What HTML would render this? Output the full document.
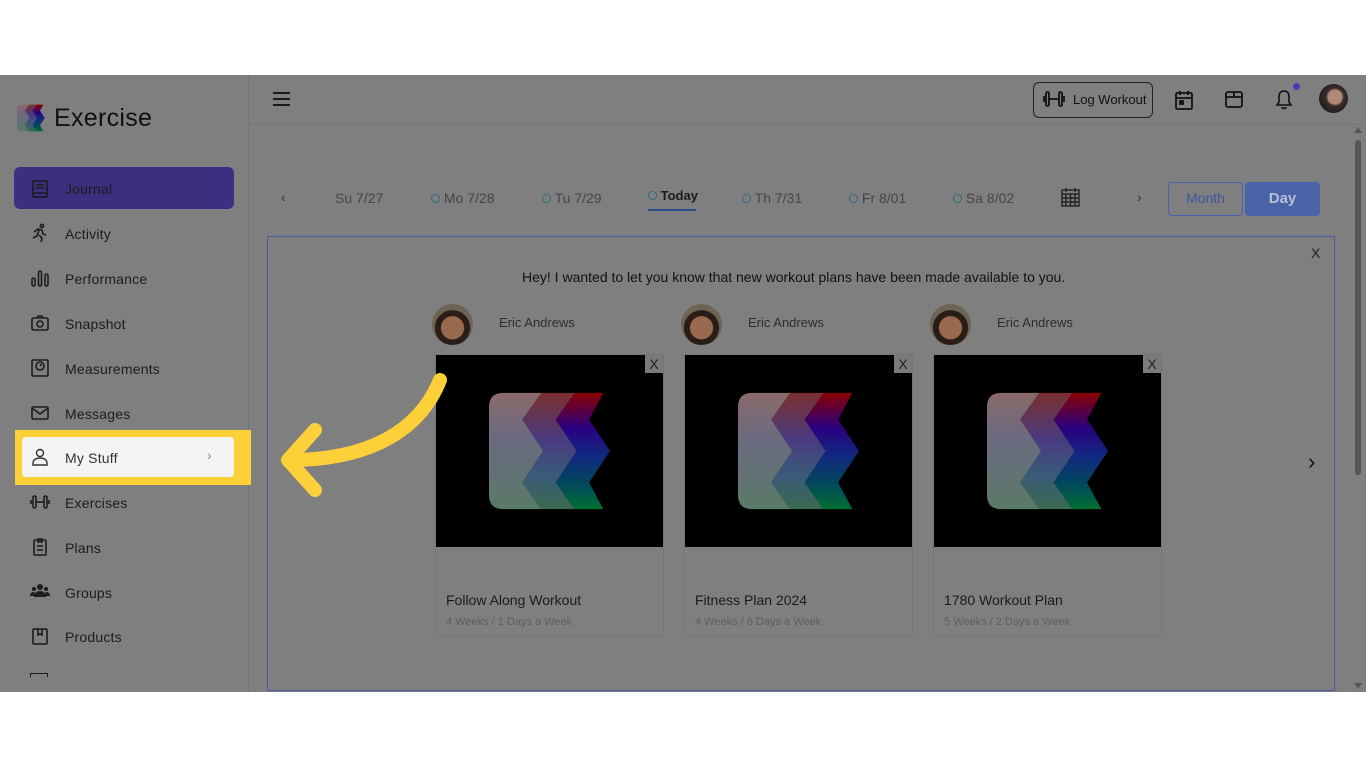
<!DOCTYPE html>
<html><head><meta charset="utf-8"><style>
*{margin:0;padding:0;box-sizing:border-box}
body{width:1366px;height:768px;background:#fff;font-family:"Liberation Sans",sans-serif;position:relative;overflow:hidden}
.app{position:absolute;left:0;top:75px;width:1366px;height:617px;background:#7f7f7f;overflow:hidden}
.side{position:absolute;left:0;top:0;width:249px;height:617px;border-right:1px solid #757575}
.top{position:absolute;left:249px;top:0;right:0;height:50px;border-bottom:1px solid #757575}
.nav{position:absolute;left:65px;font-size:14px;color:#1c1c1c;letter-spacing:.2px}
.ico{position:absolute;left:30px;width:20px;height:20px}
.t{position:absolute;font-size:14px;color:#3a3a3a}
.card{position:absolute;top:279px;width:229px;height:282px;border:1px solid #767676;background:#7f7f7f}
.card .img{height:192px;background:#000;position:relative}
.card .x{position:absolute;right:0;top:0;width:18px;height:18px;background:#7a7a7a;color:#222;font-size:14px;text-align:center;line-height:18px}
.card .n{position:absolute;left:10px;top:237px;font-size:14px;color:#1a1a1a}
.card .s{position:absolute;left:10px;top:261px;font-size:11px;color:#5e5e5e}
.av{position:absolute;top:229px;width:41px;height:41px;border-radius:50%;background:radial-gradient(circle at 50% 58%,#9a6a50 0 36%,#2a1c16 38% 55%,#6e6354 57%)}
.an{position:absolute;top:240px;font-size:13px;color:#2e2e2e}
</style></head><body>
<svg width="0" height="0" style="position:absolute"><defs>
<linearGradient id="a" x1="0" y1="0" x2="0" y2="1"><stop offset="0" stop-color="#8a6a6a"/><stop offset=".4" stop-color="#6a6a80"/><stop offset="1" stop-color="#5a7a68"/></linearGradient>
<linearGradient id="b" x1="0" y1="0" x2="0" y2="1"><stop offset="0" stop-color="#7a3030"/><stop offset=".4" stop-color="#4a3a80"/><stop offset=".7" stop-color="#3a5a7a"/><stop offset="1" stop-color="#3a6a50"/></linearGradient>
<linearGradient id="c" x1="0" y1="0" x2="0" y2="1"><stop offset="0" stop-color="#8a0000"/><stop offset=".3" stop-color="#2a0080"/><stop offset=".55" stop-color="#102a80"/><stop offset=".8" stop-color="#004a5a"/><stop offset="1" stop-color="#007030"/></linearGradient>
<g id="lg">
<path d="M15 0H55L35 28 57 61 35 94 55 122H15Q0 122 0 107V15Q0 0 15 0z" fill="url(#a)"/>
<path d="M55 0H90L70 28 92 61 70 94 90 122H55L35 94 57 61 35 28z" fill="url(#b)"/>
<path d="M90 0H120L105 28 127 61 105 94 120 122H90L70 94 92 61 70 28z" fill="url(#c)"/>
</g></defs></svg>
<div class="app">
<div class="side">
 <svg style="position:absolute;left:17px;top:29px" width="28" height="28" viewBox="0 0 128 122"><use href="#lg"/></svg>
 <div style="position:absolute;left:54px;top:29px;font-size:25px;color:#111;letter-spacing:.3px">Exercise</div>
 <div style="position:absolute;left:14px;top:92px;width:220px;height:42px;background:#3b2f7f;border-radius:6px"></div>
 <svg class="ico" style="top:104px" viewBox="0 0 20 20" fill="none" stroke="#1c1c1c" stroke-width="1.6"><rect x="3" y="2" width="14" height="16" rx="1"/><path d="M6 6h8M6 9h8M3 14h14"/></svg>
 <div class="nav" style="top:106px">Journal</div>
 <svg class="ico" style="top:148px" viewBox="0 0 20 20" fill="none" stroke="#1c1c1c" stroke-width="1.6"><circle cx="12" cy="3" r="1.6"/><path d="M4 9l4-3 4 1 1 4 3 1M9 7l-2 6-4 2M9 12l3 3-1 4"/></svg>
 <div class="nav" style="top:151px">Activity</div>
 <svg class="ico" style="top:193px" viewBox="0 0 20 20" fill="none" stroke="#1c1c1c" stroke-width="1.6"><rect x="2" y="10" width="3" height="8" rx="1.5"/><rect x="8.5" y="3" width="3" height="15" rx="1.5"/><rect x="15" y="6" width="3" height="12" rx="1.5"/></svg>
 <div class="nav" style="top:196px">Performance</div>
 <svg class="ico" style="top:238px" viewBox="0 0 20 20" fill="none" stroke="#1c1c1c" stroke-width="1.6"><rect x="2" y="5" width="16" height="12" rx="1.5"/><path d="M7 5l1-2h4l1 2"/><circle cx="10" cy="11" r="3"/></svg>
 <div class="nav" style="top:241px">Snapshot</div>
 <svg class="ico" style="top:283px" viewBox="0 0 20 20" fill="none" stroke="#1c1c1c" stroke-width="1.6"><rect x="2" y="2" width="16" height="16" rx="1.5"/><circle cx="10" cy="8" r="4"/><path d="M10 8l1.5-2"/></svg>
 <div class="nav" style="top:286px">Measurements</div>
 <svg class="ico" style="top:328px" viewBox="0 0 20 20" fill="none" stroke="#1c1c1c" stroke-width="1.6"><rect x="2" y="4" width="16" height="12" rx="1"/><path d="M2 5l8 6 8-6"/></svg>
 <div class="nav" style="top:331px">Messages</div>
 <div style="position:absolute;left:15px;top:355px;width:236px;height:55px;background:#fdd039"></div>
 <div style="position:absolute;left:22px;top:362px;width:212px;height:40px;background:#f4f4f4;border-radius:4px"></div>
 <svg class="ico" style="top:372px" viewBox="0 0 20 20" fill="none" stroke="#333" stroke-width="1.4"><circle cx="10" cy="6" r="3.5"/><path d="M3 18v-2c0-3 3-5 7-5s7 2 7 5v2z"/></svg>
 <div class="nav" style="top:375px;color:#333">My Stuff</div>
 <div style="position:absolute;left:207px;top:372px;font-size:14px;color:#888">›</div>
 <svg class="ico" style="top:417px" viewBox="0 0 20 20" fill="none" stroke="#1c1c1c" stroke-width="1.6"><rect x="3" y="4" width="3" height="12" rx="1.5"/><rect x="14" y="4" width="3" height="12" rx="1.5"/><path d="M6 10h8M1 8v4M19 8v4"/></svg>
 <div class="nav" style="top:420px">Exercises</div>
 <svg class="ico" style="top:462px" viewBox="0 0 20 20" fill="none" stroke="#1c1c1c" stroke-width="1.6"><rect x="4" y="3" width="12" height="15" rx="1"/><path d="M8 2h4v3H8zM7 9h6M7 13h6"/></svg>
 <div class="nav" style="top:465px">Plans</div>
 <svg class="ico" style="top:506px" viewBox="0 0 20 20" fill="#1c1c1c"><circle cx="10" cy="6" r="3"/><circle cx="4" cy="8" r="2"/><circle cx="16" cy="8" r="2"/><path d="M4 16c0-4 3-6 6-6s6 2 6 6zM0 15c0-3 2-4 4-4l1 1-1 3zM20 15c0-3-2-4-4-4l-1 1 1 3z"/></svg>
 <div class="nav" style="top:510px">Groups</div>
 <svg class="ico" style="top:551px" viewBox="0 0 20 20" fill="none" stroke="#1c1c1c" stroke-width="1.6"><rect x="3" y="3" width="14" height="15" rx="1"/><path d="M8 3v6l2-1 2 1V3"/></svg>
 <div class="nav" style="top:554px">Products</div>
 <div style="position:absolute;left:30px;top:598px;width:18px;height:4px;border:1.6px solid #1c1c1c;border-bottom:none"></div>
</div>
<div class="top">
 <svg style="position:absolute;left:24px;top:17px" width="17" height="14" viewBox="0 0 17 14" stroke="#1c1c1c" stroke-width="2"><path d="M0 1h17M0 7h17M0 13h17"/></svg>
 <div style="position:absolute;left:784px;top:7px;width:120px;height:36px;border:1px solid #222;border-radius:6px"></div>
 <svg style="position:absolute;left:794px;top:16px" width="22" height="16" viewBox="0 0 22 16" fill="none" stroke="#111" stroke-width="1.8"><rect x="3" y="1" width="3" height="14" rx="1.5"/><rect x="16" y="1" width="3" height="14" rx="1.5"/><path d="M6 8h10M1 5v6M21 5v6"/></svg>
 <div style="position:absolute;left:824px;top:17px;font-size:13px;color:#111">Log Workout</div>
 <svg style="position:absolute;left:926px;top:15px" width="18" height="20" viewBox="0 0 18 20" fill="none" stroke="#111" stroke-width="1.8"><rect x="1" y="3" width="16" height="16" rx="1.5"/><path d="M1 8h16M5 1v4M13 1v4"/><rect x="5" y="11" width="3" height="3" fill="#111"/></svg>
 <svg style="position:absolute;left:976px;top:15px" width="18" height="18" viewBox="0 0 18 18" fill="none" stroke="#111" stroke-width="1.8"><rect x="1" y="2" width="16" height="15" rx="2"/><path d="M1 7h16M9 2v5"/></svg>
 <svg style="position:absolute;left:1026px;top:14px" width="18" height="21" viewBox="0 0 18 21" fill="none" stroke="#111" stroke-width="1.6"><path d="M9 2c-4 0-5 3-5 6v5l-2 3h14l-2-3V8c0-3-1-6-5-6zM7 18c0 2 4 2 4 0"/></svg>
 <div style="position:absolute;left:1044px;top:8px;width:7px;height:7px;border-radius:50%;background:#4a3cb0"></div>
 <div style="position:absolute;left:1070px;top:9px;width:29px;height:29px;border-radius:50%;background:radial-gradient(circle at 55% 45%,#b08a78 0 30%,#3a2a28 40%,#222 70%)"></div>
</div>
<div style="position:absolute;left:1355px;top:65px;width:6px;height:335px;background:#555;border-radius:3px"></div>
<div style="position:absolute;left:1354px;top:52px;border:4px solid transparent;border-bottom:6px solid #555;border-top:none"></div>
<div style="position:absolute;left:1354px;top:608px;border:4px solid transparent;border-top:6px solid #555;border-bottom:none"></div>

<div class="t" style="left:281px;top:114px;color:#333">‹</div>
<div class="t" style="left:335px;top:115px;color:#454545">Su 7/27</div>
<div class="t" style="left:431px;top:115px;color:#454545"><span style="display:inline-block;width:9px;height:9px;border:1.5px solid #2e6a80;border-radius:50%"></span> Mo 7/28</div>
<div class="t" style="left:542px;top:115px;color:#454545"><span style="display:inline-block;width:9px;height:9px;border:1.5px solid #2e6a80;border-radius:50%"></span> Tu 7/29</div>
<div class="t" style="left:648px;top:113px;color:#1a1a1a;font-size:13px;font-weight:bold"><span style="display:inline-block;width:9px;height:9px;border:1.5px solid #2e6a80;border-radius:50%"></span> Today</div>
<div style="position:absolute;left:648px;top:134px;width:48px;height:2px;background:#2a4a8a"></div>
<div class="t" style="left:742px;top:115px;color:#454545"><span style="display:inline-block;width:9px;height:9px;border:1.5px solid #2e6a80;border-radius:50%"></span> Th 7/31</div>
<div class="t" style="left:849px;top:115px;color:#454545"><span style="display:inline-block;width:9px;height:9px;border:1.5px solid #2e6a80;border-radius:50%"></span> Fr 8/01</div>
<div class="t" style="left:953px;top:115px;color:#454545"><span style="display:inline-block;width:9px;height:9px;border:1.5px solid #2e6a80;border-radius:50%"></span> Sa 8/02</div>
<svg style="position:absolute;left:1061px;top:112px" width="19" height="20" viewBox="0 0 19 20" fill="none" stroke="#222" stroke-width="1.4"><rect x="1" y="3" width="17" height="16"/><path d="M1 7h17M1 11h17M1 15h17M5 7v12M9.5 7v12M14 7v12M5 1v4M14 1v4"/></svg>
<div class="t" style="left:1137px;top:114px;color:#333">›</div>
<div style="position:absolute;left:1168px;top:107px;width:75px;height:34px;border:1.5px solid #4a62b0;border-radius:4px;color:#3f55a0;font-size:14px;text-align:center;line-height:31px">Month</div>
<div style="position:absolute;left:1245px;top:107px;width:75px;height:34px;background:#4a62a8;border-radius:4px;color:#b8c0d8;font-size:15px;font-weight:bold;text-align:center;line-height:34px">Day</div>

<div style="position:absolute;left:267px;top:161px;width:1068px;height:455px;border:1.5px solid #4a5a9e"></div>
<div class="t" style="left:1311px;top:170px;color:#222">X</div>
<div class="t" style="left:522px;top:194px;color:#111">Hey! I wanted to let you know that new workout plans have been made available to you.</div>

<div class="av" style="left:432px"></div><div class="an" style="left:499px">Eric Andrews</div>
<div class="av" style="left:681px"></div><div class="an" style="left:748px">Eric Andrews</div>
<div class="av" style="left:930px"></div><div class="an" style="left:997px">Eric Andrews</div>

<div class="card" style="left:435px"><div class="img"><svg style="position:absolute;left:53px;top:35px" width="122" height="122" viewBox="0 0 128 122"><use href="#lg"/></svg><div class="x">X</div></div><div class="n">Follow Along Workout</div><div class="s">4 Weeks / 1 Days a Week</div></div>
<div class="card" style="left:684px"><div class="img"><svg style="position:absolute;left:53px;top:35px" width="122" height="122" viewBox="0 0 128 122"><use href="#lg"/></svg><div class="x">X</div></div><div class="n">Fitness Plan 2024</div><div class="s">4 Weeks / 6 Days a Week</div></div>
<div class="card" style="left:933px"><div class="img"><svg style="position:absolute;left:53px;top:35px" width="122" height="122" viewBox="0 0 128 122"><use href="#lg"/></svg><div class="x">X</div></div><div class="n">1780 Workout Plan</div><div class="s">5 Weeks / 2 Days a Week</div></div>
<div class="t" style="left:1308px;top:374px;font-size:22px;color:#111">›</div>
</div>
<svg style="position:absolute;left:0;top:0" width="1366" height="768"><path d="M440 380C420 430 370 460 290 460M315 430L288 460 315 490" fill="none" stroke="#fdd039" stroke-width="14" stroke-linecap="round" stroke-linejoin="round"/></svg>
</body></html>
